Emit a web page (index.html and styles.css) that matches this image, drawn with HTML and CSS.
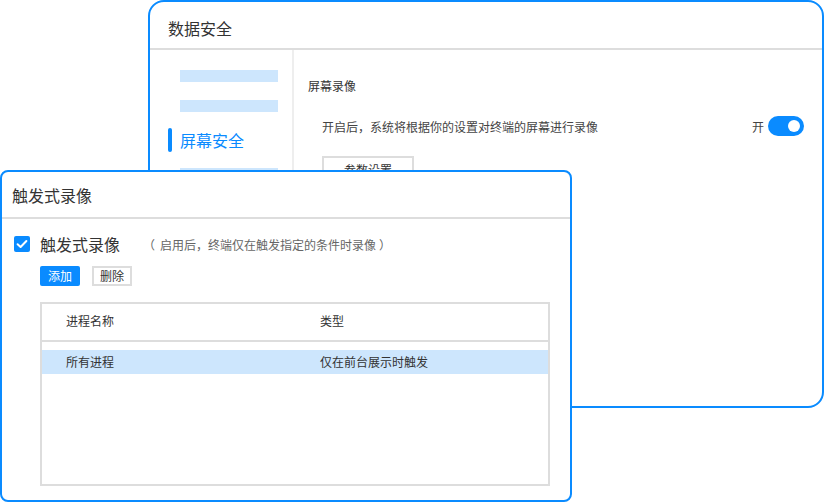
FILE: index.html
```html
<!DOCTYPE html>
<html lang="zh-CN">
<head>
<meta charset="utf-8">
<title>数据安全</title>
<link rel="stylesheet" href="styles.css">
</head>
<body>
<div class="desk">
  <section class="win win-back">
    <header class="win-head head-back">数据安全</header>
    <div class="back-body">
      <nav class="side">
        <div class="side-bar bar1"></div>
        <div class="side-bar bar2"></div>
        <div class="side-item active">屏幕安全</div>
        <div class="side-bar bar4"></div>
      </nav>
      <div class="content">
        <div class="sec-title">屏幕录像</div>
        <div class="opt-row">
          <span class="opt-desc">开启后，系统将根据你的设置对终端的屏幕进行录像</span>
          <span class="switch-wrap"><span class="switch-label">开</span><span class="switch"><span class="knob"></span></span></span>
        </div>
        <div class="param-btn">参数设置</div>
      </div>
    </div>
  </section>

  <section class="win win-front">
    <header class="win-head head-front">触发式录像</header>
    <div class="front-body">
      <div class="check-row">
        <span class="checkbox">
          <svg width="16" height="16" viewBox="0 0 16 16"><path d="M3.6 8.2 L6.6 11 L12.4 5" fill="none" stroke="#fff" stroke-width="2" stroke-linecap="round" stroke-linejoin="round"/></svg>
        </span>
        <span class="check-label">触发式录像</span>
        <span class="check-hint"><span class="paren-open">（</span>启用后，终端仅在触发指定的条件时录像<span class="paren-close">）</span></span>
      </div>
      <div class="btn-row">
        <span class="btn btn-primary">添加</span>
        <span class="btn btn-plain">删除</span>
      </div>
      <div class="table">
        <div class="t-head">
          <span>进程名称</span>
          <span>类型</span>
        </div>
        <div class="t-row selected">
          <span>所有进程</span>
          <span>仅在前台展示时触发</span>
        </div>
      </div>
    </div>
  </section>
</div>
</body>
</html>
```

FILE: styles.css
```css
* { box-sizing: border-box; }
html, body { margin: 0; padding: 0; background: #fff; }
body {
  font-family: "Noto Sans CJK SC", "Noto Sans", sans-serif;
  color: #333;
}
.desk {
  position: relative;
  width: 824px;
  height: 502px;
  overflow: hidden;
}
.win {
  position: absolute;
  background: #fff;
  border: 2px solid #0a8bff;
  display: flex;
  flex-direction: column;
  overflow: hidden;
}
.win-back {
  left: 148px;
  top: 0;
  width: 676px;
  height: 408px;
  border-radius: 16px;
}
.win-front {
  left: 0;
  top: 170px;
  width: 572px;
  height: 332px;
  border-radius: 8px;
}
.win-head {
  font-size: 16px;
  line-height: 20px;
  color: #333;
  border-bottom: 2px solid #dddddd;
  flex: none;
}
.head-back {
  height: 48px;
  padding: 16px 18px 0;
}
.head-front {
  height: 47px;
  padding: 13px 10px 0;
}

/* back window body */
.back-body {
  flex: 1;
  display: flex;
}
.side {
  width: 144px;
  flex: none;
  border-right: 2px solid #eeeeee;
  padding-top: 20px;
  display: flex;
  flex-direction: column;
}
.side-bar {
  margin-left: 30px;
  width: 98px;
  height: 12px;
  background: #cde6fd;
}
.bar2 { margin-top: 18px; }
.bar4 { margin-top: 16px; }
.side-item {
  margin-top: 16px;
  height: 24px;
  line-height: 24px;
  font-size: 16px;
  padding-left: 30px;
  position: relative;
}
.side-item.active { color: #0a8bff; }
.side-item.active::before {
  content: "";
  position: absolute;
  left: 18px;
  top: 0;
  width: 4px;
  height: 24px;
  border-radius: 2px;
  background: #0a8bff;
}
.content {
  flex: 1;
  padding: 26px 18px 0 14px;
}
.sec-title {
  font-size: 12px;
  line-height: 20px;
  color: #333;
}
.opt-row {
  margin-top: 20px;
  margin-left: 14px;
  height: 20px;
  display: flex;
  align-items: center;
  justify-content: space-between;
}
.opt-desc {
  font-size: 12px;
  color: #444;
}
.switch-wrap {
  display: flex;
  align-items: center;
  gap: 4px;
}
.switch-label { font-size: 12px; color: #444; }
.switch {
  width: 36px;
  height: 20px;
  border-radius: 10px;
  background: #0a8bff;
  display: flex;
  align-items: center;
  justify-content: flex-end;
  padding-right: 4px;
}
.knob {
  width: 12px;
  height: 12px;
  border-radius: 50%;
  background: #fff;
}
.param-btn {
  margin-top: 20px;
  margin-left: 14px;
  width: 92px;
  height: 28px;
  border: 2px solid #dddddd;
  font-size: 12px;
  line-height: 24px;
  text-align: center;
  color: #333;
}

/* front window body */
.front-body {
  flex: 1;
  padding: 17px 20px 0 12px;
  display: flex;
  flex-direction: column;
}
.check-row {
  display: flex;
  align-items: center;
  height: 16px;
}
.checkbox {
  width: 16px;
  height: 16px;
  border-radius: 2px;
  background: #0a8bff;
  display: flex;
  flex: none;
}
.check-label {
  margin-left: 10px;
  font-size: 16px;
  line-height: 20px;
  color: #333;
}
.check-hint {
  margin-left: 23px;
  font-size: 12px;
  color: #666;
}
.paren-open { margin-right: 5px; }
.paren-close { margin-left: 3px; }
.btn-row {
  margin-top: 14px;
  margin-left: 26px;
  display: flex;
  gap: 12px;
}
.btn {
  width: 40px;
  height: 20px;
  font-size: 12px;
  line-height: 20px;
  text-align: center;
}
.btn-primary {
  background: #0a8bff;
  color: #fff;
  border-radius: 2px;
}
.btn-plain {
  border: 2px solid #dddddd;
  line-height: 16px;
  color: #333;
}
.table {
  margin-top: 16px;
  margin-left: 26px;
  width: 510px;
  height: 184px;
  border: 2px solid #dddddd;
  font-size: 12px;
  color: #333;
}
.t-head, .t-row {
  display: grid;
  grid-template-columns: 254px 1fr;
  padding-left: 24px;
}
.t-head {
  height: 38px;
  line-height: 34px;
  border-bottom: 2px solid #dddddd;
}
.t-row {
  margin-top: 8px;
  height: 24px;
  line-height: 24px;
}
.t-row.selected { background: #cde6fd; }
```
